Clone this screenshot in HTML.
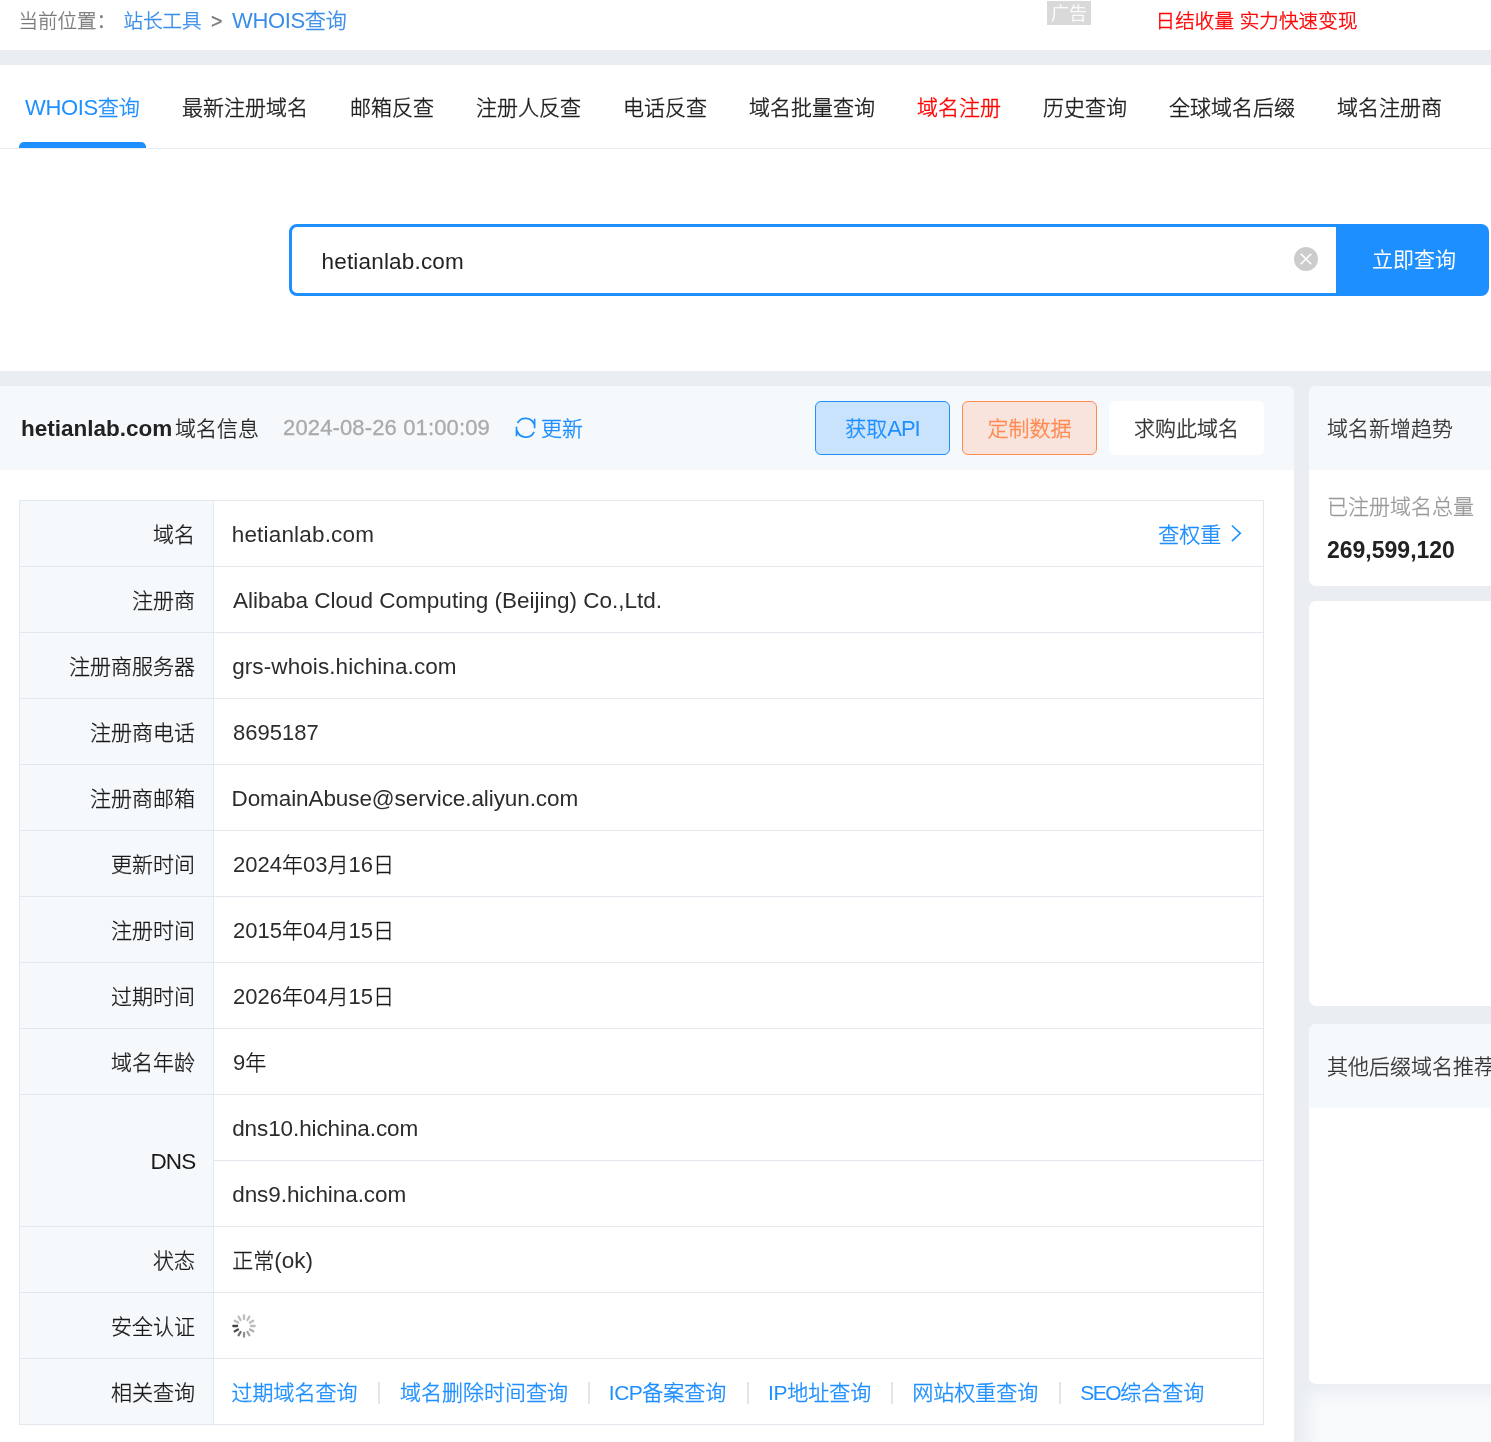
<!DOCTYPE html>
<html lang="zh-CN">
<head>
<meta charset="utf-8">
<title>WHOIS查询</title>
<style>
*{box-sizing:border-box;margin:0;padding:0}
html,body{width:1491px;height:1442px;overflow:hidden;background:#fff}
body{position:relative;will-change:transform;font-family:"Liberation Sans","Noto Sans CJK SC",sans-serif;font-size:21px;color:#333;line-height:1;font-weight:300;-webkit-text-stroke:.3px}
a{text-decoration:none;color:#1e8fff;-webkit-text-stroke:.42px}
.abs{position:absolute}
.t{position:absolute;white-space:nowrap;line-height:30px;height:30px}
.la{font-size:22.5px;-webkit-text-stroke:0}
.dg{font-size:22px;-webkit-text-stroke:0}
.cp{letter-spacing:-0.8px;-webkit-text-stroke:0}
b{font-weight:700}
/* top breadcrumb */
#crumb .t{font-size:19.5px;top:6px}
.gray{color:#7a7a7a}
.blue{color:#1e8fff}
.lb{color:#3a8de8}
/* bands */
.band{position:absolute;left:0;width:1491px;height:15px;background:#eaeef2}
/* tabs */
#tabs .t{top:93px;font-size:21px;color:#1c1c1c}
#tabline{position:absolute;left:0;top:148px;width:1491px;height:1px;background:#e8ebef}
#tabbar{position:absolute;left:19px;top:142px;width:127px;height:6px;background:#1e8fff;border-radius:5px 5px 0 0}
/* search */
#sbox{position:absolute;left:289px;top:224px;width:1050px;height:72px;border:3px solid #1e8fff;border-radius:8px 0 0 8px;background:#fff}
#sbtn{position:absolute;left:1336px;top:224px;width:153px;height:72px;background:#1e8fff;border-radius:0 8px 8px 0;color:#fff}
#clear{position:absolute;left:1294px;top:247px;width:24px;height:24px}
/* page grey area */
#grey{position:absolute;left:0;top:371px;width:1491px;height:1071px;background:#eaeef2}
#main{position:absolute;left:0;top:386px;width:1294px;height:1056px;background:#fff;border-radius:0 7px 0 0;overflow:hidden}
#mhead{position:absolute;left:0;top:0;width:1294px;height:84px;background:#f5f9fc}
.btn{position:absolute;top:15px;height:54px;border-radius:6px;text-align:center;line-height:54px;font-size:21px;white-space:nowrap}
/* table */
#tbl{position:absolute;left:19px;top:114px;width:1245px;height:925px;border:1px solid #e4e7ed;border-width:1px 1px 1px 1px}
#tbl .lab{position:absolute;left:0;top:0;width:194px;height:923px;background:#f5f9fc;border-right:1px solid #e4e7ed}
.hl{position:absolute;height:1px;background:#e4e7ed;left:0;width:1243px}
.l{position:absolute;right:1068px;white-space:nowrap;height:30px;line-height:30px;color:#1a1a1a}
.v{position:absolute;left:213px;white-space:nowrap;height:30px;line-height:30px;color:#1a1a1a}
.v .la,.v .dg{color:#2c2c2c}
.sep{position:absolute;top:1382px;width:2px;height:22px;background:#e1e5ec}
/* sidebar */
.card{position:absolute;left:1309px;width:200px;background:#fff;border-radius:7px 0 0 7px;overflow:hidden}
.chead{position:absolute;left:0;top:0;width:200px;height:84px;background:#f5f9fc}
</style>
</head>
<body>
<!-- breadcrumb -->
<div id="crumb">
  <span class="t gray" style="left:18.5px">当前位置：</span>
  <a class="t lb" style="left:123.5px">站长工具</a>
  <span class="t gray" style="left:211px">&gt;</span>
  <a class="t lb" style="left:232px;font-size:21px"><span class="cp" style="font-size:22px;letter-spacing:-.35px">WHOIS</span>查询</a>
  <span class="abs" style="left:1047px;top:1px;width:44px;height:24px;background:#d9d9d9;color:#fafafa;font-size:18px;line-height:26px;text-align:center;font-weight:400;-webkit-text-stroke:0">广告</span>
  <a class="t" style="left:1155.5px;color:#f00;letter-spacing:.15px">日结收量 实力快速变现</a>
</div>
<div class="band" style="top:50px"></div>

<!-- tabs -->
<div id="tabs">
  <a class="t" style="left:25px;color:#1e8fff"><span class="cp" style="font-size:22px;letter-spacing:-.35px">WHOIS</span>查询</a>
  <a class="t" style="left:182px">最新注册域名</a>
  <a class="t" style="left:350px">邮箱反查</a>
  <a class="t" style="left:476px">注册人反查</a>
  <a class="t" style="left:623px">电话反查</a>
  <a class="t" style="left:749px">域名批量查询</a>
  <a class="t" style="left:917px;color:#f00">域名注册</a>
  <a class="t" style="left:1043px">历史查询</a>
  <a class="t" style="left:1169px">全球域名后缀</a>
  <a class="t" style="left:1337px">域名注册商</a>
</div>
<div id="tabline"></div>
<div id="tabbar"></div>

<!-- search -->
<div id="sbox"><span class="t la" style="left:29.5px;top:20px;color:#222;letter-spacing:.18px">hetianlab.com</span></div>
<svg id="clear" viewBox="0 0 24 24"><circle cx="12" cy="12" r="12" fill="#ccc"/><path d="M6.7 6.7L17.3 17.3M17.3 6.7L6.7 17.3" stroke="#fff" stroke-width="1.6" fill="none"/></svg>
<div id="sbtn"><span class="t" style="left:36px;top:21px;font-weight:400;-webkit-text-stroke:0">立即查询</span></div>

<!-- grey zone -->
<div id="grey"></div>
<div id="main">
  <div id="mhead">
    <b class="t la" style="left:21px;top:28px;color:#222;font-size:22.5px">hetianlab.com</b><span class="t" style="left:175px;top:28px;color:#222">域名信息</span>
    <span class="t" style="left:283px;top:27px;color:#aaa;font-size:22px;letter-spacing:.14px">2024-08-26 01:00:09</span>
    <svg class="abs" style="left:515px;top:31px" width="21" height="21" viewBox="0 0 21 21" fill="none" stroke="#1e8fff" stroke-width="1.7"><path d="M2.5 6.1A9.2 9.2 0 0 1 19.3 7.6M19.6 1.7V11.3M19.1 14.9A9.2 9.2 0 0 1 1.9 13.3M1.5 9.8V19.2"/></svg>
    <a class="t" style="left:541px;top:27.6px">更新</a>
    <a class="btn" style="left:815px;width:135px;background:#cae3fc;border:1.3px solid #1e8fff;color:#1e8fff">获取<span class="cp" style="font-size:22px;letter-spacing:-1px">API</span></a>
    <a class="btn" style="left:962px;width:135px;background:#f8e4dc;border:1.3px solid #ff8a50;color:#ff8a50">定制数据</a>
    <a class="btn" style="left:1109px;width:155px;background:#fff;color:#333;line-height:55px">求购此域名</a>
  </div>
  <div id="tbl">
    <div class="lab"></div>
    <span class="l" style="top:19px">域名</span>
    <span class="v" style="top:19px;left:211.7px"><span class="la" style="letter-spacing:.18px">hetianlab.com</span></span>
    <div class="hl" style="top:65px"></div>
    <span class="l" style="top:85px">注册商</span>
    <span class="v" style="top:85px"><span class="la">Alibaba Cloud Computing (Beijing) Co.,Ltd.</span></span>
    <div class="hl" style="top:131px"></div>
    <span class="l" style="top:151px">注册商服务器</span>
    <span class="v" style="top:151px;left:212.2px"><span class="la" style="letter-spacing:.09px">grs-whois.hichina.com</span></span>
    <div class="hl" style="top:197px"></div>
    <span class="l" style="top:217px">注册商电话</span>
    <span class="v" style="top:217px"><span class="dg">8695187</span></span>
    <div class="hl" style="top:263px"></div>
    <span class="l" style="top:283px">注册商邮箱</span>
    <span class="v" style="top:283px;left:211.5px"><span class="la" style="letter-spacing:-.09px">DomainAbuse@service.aliyun.com</span></span>
    <div class="hl" style="top:329px"></div>
    <span class="l" style="top:349px">更新时间</span>
    <span class="v" style="top:349px"><span class="dg">2024</span>年<span class="dg">03</span>月<span class="dg">16</span>日</span>
    <div class="hl" style="top:395px"></div>
    <span class="l" style="top:415px">注册时间</span>
    <span class="v" style="top:415px"><span class="dg">2015</span>年<span class="dg">04</span>月<span class="dg">15</span>日</span>
    <div class="hl" style="top:461px"></div>
    <span class="l" style="top:481px">过期时间</span>
    <span class="v" style="top:481px"><span class="dg">2026</span>年<span class="dg">04</span>月<span class="dg">15</span>日</span>
    <div class="hl" style="top:527px"></div>
    <span class="l" style="top:547px">域名年龄</span>
    <span class="v" style="top:547px"><span class="dg">9</span>年</span>
    <div class="hl" style="top:593px"></div>
    <span class="v" style="top:613px;left:212.2px"><span class="la" style="letter-spacing:-.1px">dns10.hichina.com</span></span>
    <div class="hl" style="top:659px;left:194px;width:1049px"></div>
    <span class="v" style="top:679px;left:212.2px"><span class="la" style="letter-spacing:-.07px">dns9.hichina.com</span></span>
    <div class="hl" style="top:725px"></div>
    <span class="l" style="top:745px">状态</span>
    <span class="v" style="top:745px;left:212.3px">正常<span class="la">(ok)</span></span>
    <div class="hl" style="top:791px"></div>
    <span class="l" style="top:811px">安全认证</span>
    <div class="hl" style="top:857px"></div>
    <span class="l" style="top:877px">相关查询</span>
    <span class="l" style="top:646px"><span class="la" style="letter-spacing:-.8px;margin-right:-.5px">DNS</span></span>
    <a class="t" style="left:1138.3px;top:19px">查权重</a>
    <svg class="abs" style="left:1210px;top:23px" width="14" height="20" viewBox="0 0 14 20"><path d="M1.9 1.5L10.3 9.3L1.9 17.1" stroke="#1e8fff" stroke-width="1.6" fill="none"/></svg>
    <svg class="abs" style="left:211px;top:812px" width="26" height="26" viewBox="-13 -13 26 26" stroke="#3a3a3a" stroke-width="2.3" stroke-linecap="round"><line x1="0" y1="-6.9" x2="0" y2="-10.7" stroke-opacity="0.34" transform="rotate(0)"/><line x1="0" y1="-6.9" x2="0" y2="-10.7" stroke-opacity="0.34" transform="rotate(30)"/><line x1="0" y1="-6.9" x2="0" y2="-10.7" stroke-opacity="0.34" transform="rotate(60)"/><line x1="0" y1="-6.9" x2="0" y2="-10.7" stroke-opacity="0.34" transform="rotate(90)"/><line x1="0" y1="-6.9" x2="0" y2="-10.7" stroke-opacity="0.4" transform="rotate(120)"/><line x1="0" y1="-6.9" x2="0" y2="-10.7" stroke-opacity="0.46" transform="rotate(150)"/><line x1="0" y1="-6.9" x2="0" y2="-10.7" stroke-opacity="0.56" transform="rotate(180)"/><line x1="0" y1="-6.9" x2="0" y2="-10.7" stroke-opacity="0.72" transform="rotate(210)"/><line x1="0" y1="-6.9" x2="0" y2="-10.7" stroke-opacity="0.9" transform="rotate(240)"/><line x1="0" y1="-6.9" x2="0" y2="-10.7" stroke-opacity="0.95" transform="rotate(270)"/><line x1="0" y1="-6.9" x2="0" y2="-10.7" stroke-opacity="0.34" transform="rotate(300)"/><line x1="0" y1="-6.9" x2="0" y2="-10.7" stroke-opacity="0.34" transform="rotate(330)"/></svg>
    <a class="t" style="left:211.5px;top:877px">过期域名查询</a>
    <a class="t" style="left:380px;top:877px">域名删除时间查询</a>
    <a class="t" style="left:588.8px;top:877px"><span class="cp" style="letter-spacing:-.5px">ICP</span>备案查询</a>
    <a class="t" style="left:748px;top:877px"><span class="cp" style="letter-spacing:-.3px">IP</span>地址查询</a>
    <a class="t" style="left:892.3px;top:877px">网站权重查询</a>
    <a class="t" style="left:1060.3px;top:877px"><span class="cp" style="letter-spacing:-1.5px">SEO</span>综合查询</a>
    <i class="abs" style="left:358px;top:881px;width:2px;height:22px;background:#e1e5ec"></i>
    <i class="abs" style="left:568px;top:881px;width:2px;height:22px;background:#e1e5ec"></i>
    <i class="abs" style="left:727px;top:881px;width:2px;height:22px;background:#e1e5ec"></i>
    <i class="abs" style="left:871px;top:881px;width:2px;height:22px;background:#e1e5ec"></i>
    <i class="abs" style="left:1039px;top:881px;width:2px;height:22px;background:#e1e5ec"></i>
  </div>
</div>

<!-- sidebar -->
<div class="abs" style="left:1319px;top:1403px;width:200px;height:80px;background:#f8f9fb;box-shadow:0 0 14px 10px #f8f9fb"></div>
<div class="card" style="top:386px;height:200px">
  <div class="chead"><span class="t" style="left:18px;top:28px">域名新增趋势</span></div>
  <span class="t" style="left:18px;top:106px;color:#999">已注册域名总量</span>
  <b class="t" style="left:18px;top:149px;color:#222;font-size:23px;-webkit-text-stroke:0">269,599,120</b>
</div>
<div class="card" style="top:601px;height:405px"></div>
<div class="card" style="top:1024px;height:360px">
  <div class="chead"><span class="t" style="left:18px;top:28px">其他后缀域名推荐</span></div>
</div>
</body>
</html>
